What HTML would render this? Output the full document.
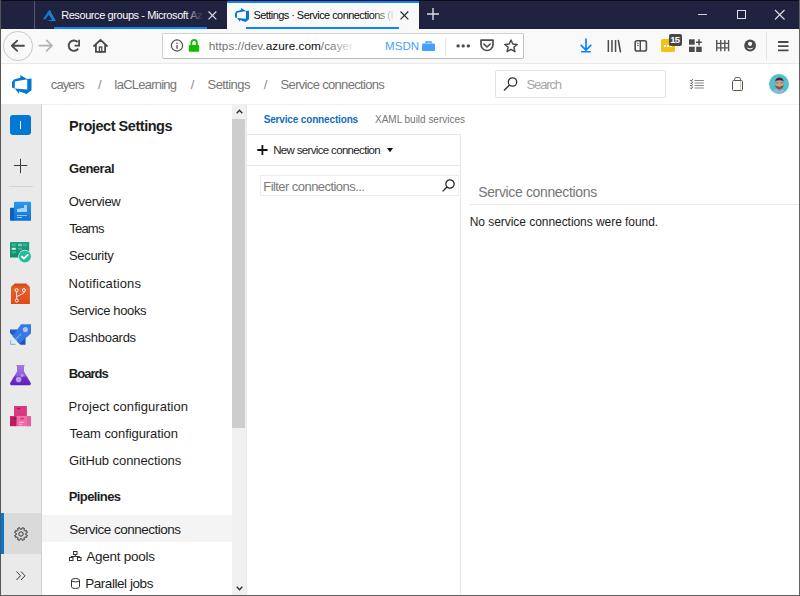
<!DOCTYPE html>
<html><head><meta charset="utf-8">
<style>
html,body{margin:0;padding:0;}
body{width:800px;height:596px;overflow:hidden;position:relative;background:#fff;font-family:"Liberation Sans",sans-serif;}
.a{position:absolute;}
.t{position:absolute;white-space:nowrap;line-height:20px;font-family:"Liberation Sans",sans-serif;}
svg{position:absolute;overflow:visible;}
</style></head><body>

<!-- ===== TAB BAR ===== -->
<div class="a" style="left:0;top:0;width:800px;height:29px;background:#202340;"></div>
<div class="a" style="left:0;top:0;width:800px;height:1px;background:#0c0c18;"></div>
<div class="a" style="left:34px;top:1px;width:1px;height:28px;background:#55586f;"></div>
<!-- tab1 -->
<svg style="left:42px;top:9px" width="14" height="13" viewBox="0 0 14 13">
  <path d="M7.4 0.7 L9.2 2.6 L3.6 10.2 L0.8 10.2 Z" fill="#1277d6"/>
  <path d="M8.4 2.2 L13.9 11.9 L4.2 11.9 L10.2 10.8 L6.9 6.1 Z" fill="#1584e2"/>
</svg>
<div class="a" style="left:54px;top:27px;width:153px;height:2px;background:#0a84ff;"></div>
<svg style="left:208px;top:11px" width="9" height="9" viewBox="0 0 9 9"><path d="M0.5 0.5 L8.3 8.3 M8.3 0.5 L0.5 8.3" stroke="#d8d8de" stroke-width="1.2"/></svg>
<!-- tab2 active -->
<div class="a" style="left:227px;top:1px;width:192px;height:28px;background:#f9f9fa;"></div>
<div class="a" style="left:227px;top:1px;width:192px;height:2px;background:#0a84ff;"></div>
<svg style="left:235px;top:8px" width="14" height="14" viewBox="1 1 16 16">
  <path d="M17 4v9.74l-4 3.28-6.2-2.26V17l-3.51-4.59 10.23.8V4.44zm-3.41.49L7.85 1v2.29L2.58 4.84 1 6.87v4.61l2.26 1V6.57z" fill="#0078d4"/>
</svg>
<div class="a" style="left:246px;top:27px;width:153px;height:2px;background:#0a84ff;"></div>
<svg style="left:400px;top:11px" width="9" height="9" viewBox="0 0 9 9"><path d="M0.5 0.5 L8.3 8.3 M8.3 0.5 L0.5 8.3" stroke="#2a2a2e" stroke-width="1.2"/></svg>
<!-- new tab + -->
<svg style="left:427px;top:8px" width="12" height="12" viewBox="0 0 12 12"><path d="M6 0 V12 M0 6 H12" stroke="#dcdce0" stroke-width="1.4"/></svg>
<!-- window controls -->
<div class="a" style="left:698px;top:14px;width:9px;height:1px;background:#d4d4da;"></div>
<div class="a" style="left:737px;top:10px;width:7px;height:7px;border:1px solid #e0e0e6;"></div>
<svg style="left:775px;top:10px" width="10" height="10" viewBox="0 0 10 10"><path d="M0 0 L9.5 9.5 M9.5 0 L0 9.5" stroke="#e0e0e6" stroke-width="1.1"/></svg>

<!-- ===== NAV TOOLBAR ===== -->
<div class="a" style="left:0;top:29px;width:800px;height:34px;background:#f9f9fa;"></div>
<div class="a" style="left:0;top:63px;width:800px;height:1px;background:#eaeaea;"></div>
<!-- back -->
<div class="a" style="left:3px;top:31px;width:27.5px;height:27.5px;border:1px solid #c8c8cc;border-radius:50%;"></div>
<svg style="left:8px;top:37px" width="20" height="18" viewBox="8 37 20 18"><path d="M24 45.75 H12 M17.2 40.6 L11.8 45.75 L17.2 50.9" fill="none" stroke="#4a4a4f" stroke-width="1.8" stroke-linecap="round" stroke-linejoin="round"/></svg>
<svg style="left:36px;top:37px" width="20" height="18" viewBox="36 37 20 18"><path d="M39.5 45.6 H52 M46.6 40.4 L52 45.6 L46.6 50.8" fill="none" stroke="#b1b1b3" stroke-width="1.7" stroke-linecap="round" stroke-linejoin="round"/></svg>
<!-- reload -->
<svg style="left:64px;top:37px" width="20" height="18" viewBox="64 37 20 18"><path d="M77.6 42 A5.2 5.2 0 1 0 78.2 48.6" fill="none" stroke="#4a4a4f" stroke-width="1.9"/><path d="M79.1 39.8 V45.6 H74.6" fill="none" stroke="#4a4a4f" stroke-width="1.8" stroke-linejoin="miter"/></svg>
<!-- home -->
<svg style="left:90px;top:36px" width="20" height="20" viewBox="90 36 20 20"><path d="M94 46 L100.5 39.8 L107 46 M95.9 44.5 V51.9 H105.1 V44.5" fill="none" stroke="#4a4a4f" stroke-width="1.8" stroke-linejoin="round" stroke-linecap="round"/><rect x="99.4" y="47" width="2.4" height="5" fill="none" stroke="#4a4a4f" stroke-width="1.3"/></svg>
<!-- url bar -->
<div class="a" style="left:162px;top:33px;width:360px;height:24px;background:#fff;border:1px solid #d2d2d2;border-bottom-color:#b9b9b9;border-right-color:#c0c0c0;border-radius:2px;"></div>
<svg style="left:168px;top:37px" width="34" height="17" viewBox="168 37 34 17"><circle cx="177" cy="45.5" r="5.6" fill="none" stroke="#4a4a4f" stroke-width="1.1"/><rect x="176.35" y="45.2" width="1.3" height="3.5" fill="#4a4a4f"/><rect x="176.35" y="42.7" width="1.3" height="1.3" fill="#4a4a4f"/><path d="M191.4 45.2 V42.6 A2.6 2.6 0 0 1 196.8 42.6 V45.2" fill="none" stroke="#12bc00" stroke-width="1.9"/><rect x="188.8" y="45" width="10.4" height="6.8" rx="0.8" fill="#12bc00"/></svg>
<!--briefcase-->
<svg style="left:422px;top:40.5px" width="13" height="10" viewBox="0 0 13 10"><path d="M4 2.5 V1 H9 V2.5" fill="none" stroke="#45a1ff" stroke-width="1.4"/><rect x="0" y="2.5" width="13" height="7.5" rx="1" fill="#45a1ff"/></svg>
<div class="a" style="left:445px;top:38px;width:1px;height:18px;background:#e4e4e6;"></div>
<svg style="left:456px;top:44px" width="15" height="4" viewBox="0 0 15 4"><circle cx="2.1" cy="1.9" r="1.65" fill="#4a4a4f"/><circle cx="7.2" cy="1.9" r="1.65" fill="#4a4a4f"/><circle cx="12.3" cy="1.9" r="1.65" fill="#4a4a4f"/></svg>
<!--pocket-->
<svg style="left:480px;top:39px" width="14" height="13" viewBox="0 0 14 13"><path d="M1 1.2 H13 V5.5 A6 6 0 0 1 1 5.5 Z" fill="none" stroke="#4a4a4f" stroke-width="1.7" stroke-linejoin="round"/><path d="M3.8 5 L7 8 L10.2 5" fill="none" stroke="#4a4a4f" stroke-width="1.6" stroke-linecap="round" stroke-linejoin="round"/></svg>
<!--star-->
<svg style="left:504px;top:39px" width="14" height="14" viewBox="0 0 14 14"><path d="M7 1 L8.8 5 L13.2 5.4 L9.9 8.3 L10.9 12.7 L7 10.4 L3.1 12.7 L4.1 8.3 L0.8 5.4 L5.2 5 Z" fill="none" stroke="#4a4a4f" stroke-width="1.5" stroke-linejoin="round"/></svg>
<!--download-->
<svg style="left:578px;top:37px" width="16" height="17" viewBox="578 37 16 17"><path d="M586 39 V50.2 M581.2 45.4 L586 50.2 L590.8 45.4" fill="none" stroke="#0a84ff" stroke-width="1.7" stroke-linecap="round" stroke-linejoin="round"/><rect x="581" y="51" width="10" height="1.6" rx="0.6" fill="#0a84ff"/></svg>
<!--library-->
<svg style="left:605px;top:38px" width="18" height="16" viewBox="605 38 18 16"><rect x="607.6" y="40" width="1.5" height="12" rx="0.5" fill="#4a4a4f"/><rect x="611.2" y="40" width="1.5" height="12" rx="0.5" fill="#4a4a4f"/><rect x="614.8" y="40" width="1.5" height="12" rx="0.5" fill="#4a4a4f"/><path d="M618.4 40.6 L620.4 51.6" stroke="#4a4a4f" stroke-width="1.6" stroke-linecap="round"/></svg>
<!--sidebar-->
<svg style="left:632px;top:38px" width="17" height="16" viewBox="632 38 17 16"><rect x="635.2" y="40.8" width="11.2" height="10.2" rx="1.8" fill="none" stroke="#4a4a4f" stroke-width="1.6"/><rect x="639.6" y="41" width="1.4" height="10" fill="#4a4a4f"/><rect x="637.2" y="42.8" width="1.4" height="1" fill="#4a4a4f"/><rect x="637.2" y="45" width="1.4" height="1" fill="#4a4a4f"/></svg>
<!--yellow ext-->
<div class="a" style="left:661px;top:39px;width:14px;height:13px;background:#f3c313;border-radius:1.5px;"></div>
<div class="a" style="left:663.5px;top:45px;width:9px;height:1.6px;background:repeating-linear-gradient(to right,#fff 0 1.6px,transparent 1.6px 3.2px);"></div>
<div class="a" style="left:668.5px;top:34px;width:13.5px;height:11.5px;background:#474749;border-radius:2px;"></div>
<div class="t" style="left:670.2px;top:29.8px;font-size:9.5px;font-weight:700;color:#fff;letter-spacing:-0.6px;">15</div>
<!--grid plus-->
<svg style="left:687px;top:38px" width="16" height="16" viewBox="687 38 16 16"><rect x="689" y="39.3" width="5.7" height="5.4" fill="#4a4a4f"/><rect x="689" y="46.7" width="5.7" height="5.3" fill="#4a4a4f"/><rect x="696.2" y="46.7" width="5.5" height="5.3" fill="#4a4a4f"/><path d="M699 39.3 V45.2 M696 42.2 H701.8" stroke="#4a4a4f" stroke-width="1.5"/></svg>
<!--fence-->
<svg style="left:714px;top:38px" width="18" height="16" viewBox="714 38 18 16"><path d="M716.7 40 V51.2 M720.75 40 V51.2 M724.8 40 V51.2 M728.6 40 V51.2" stroke="#55555a" stroke-width="1.4"/><path d="M716.7 43.3 H728.6 M716.7 47.9 H728.6" stroke="#55555a" stroke-width="1.3"/></svg>
<!--account-->
<svg style="left:742px;top:38px" width="16" height="16" viewBox="742 38 16 16"><circle cx="750.1" cy="45.5" r="5.9" fill="#4a4a4f"/><circle cx="750.1" cy="43.8" r="2.1" fill="#f9f9fa"/><path d="M746.3 47.2 Q750.1 52 753.9 47.2 Q750.1 49.2 746.3 47.2 Z" fill="#f9f9fa"/></svg>
<div class="a" style="left:766px;top:32px;width:1px;height:28px;background:#e4e4e6;"></div>
<!--hamburger-->
<svg style="left:778px;top:40.5px" width="11" height="11" viewBox="0 0 11 11"><path d="M0 1 H10.5 M0 5.2 H10.5 M0 9.4 H10.5" stroke="#4a4a4f" stroke-width="1.8"/></svg>

<!-- ===== AZDO HEADER ===== -->
<div class="a" style="left:1px;top:104px;width:798px;height:1px;background:#f0f0f0;"></div>
<svg style="left:11.75px;top:74.5px" width="19.5" height="19" viewBox="1 1 16 16" preserveAspectRatio="none">
  <path d="M17 4v9.74l-4 3.28-6.2-2.26V17l-3.51-4.59 10.23.8V4.44zm-3.41.49L7.85 1v2.29L2.58 4.84 1 6.87v4.61l2.26 1V6.57z" fill="#0078d4"/>
</svg>
<div class="a" style="left:495px;top:70px;width:169px;height:26px;border:1px solid #e3e3e3;border-radius:2px;"></div>
<svg style="left:503px;top:77px" width="15" height="14" viewBox="0 0 15 14"><circle cx="9.5" cy="5" r="4.2" fill="none" stroke="#333" stroke-width="1.3"/><path d="M6.5 8 L1 13.5" stroke="#333" stroke-width="1.4"/></svg>
<!--checklist-->
<svg style="left:688px;top:76px" width="18" height="14" viewBox="688 76 18 14"><path d="M694.5 80.5 H703.8 M694.5 83 H703.8 M694.5 85.5 H703.8 M694.5 88 H703.8" stroke="#777" stroke-width="0.9"/><path d="M690 80.2 L691 81.2 L693 79.3 M690 82.7 L691 83.7 L693 81.8 M690 85.2 L691 86.2 L693 84.3 M690 87.7 L691 88.7 L693 86.8" fill="none" stroke="#333" stroke-width="0.9"/></svg>
<!--bag-->
<svg style="left:730px;top:75px" width="15" height="17" viewBox="730 75 15 17"><rect x="732.5" y="80.5" width="10" height="10" rx="1" fill="none" stroke="#555" stroke-width="1"/><path d="M734.6 80.5 V79 Q734.6 77.5 736.1 77.5 H738.9 Q740.4 77.5 740.4 79 V80.5" fill="none" stroke="#666" stroke-width="1"/><path d="M740.5 81 V90" stroke="#e8c8a8" stroke-width="1"/></svg>
<!--avatar-->
<svg style="left:769px;top:74px" width="20" height="20" viewBox="0 0 20 20">
  <defs><clipPath id="avc"><circle cx="10" cy="10" r="10"/></clipPath></defs>
  <g clip-path="url(#avc)">
    <rect width="20" height="20" fill="#55bfcb"/>
    <path d="M1.5 20 Q3.5 15 9 15.2 Q16 15 18 20 Z" fill="#93b4dc"/>
    <path d="M8.5 14 L10.5 17.5 L12.5 14 Z" fill="#b08a78"/>
    <ellipse cx="10.4" cy="9.8" rx="4.3" ry="5.3" fill="#cfa58a"/>
    <path d="M6 9 Q5.8 3.6 10.4 3.5 Q15 3.6 14.8 9 L14.3 7 Q10.4 5.5 6.5 7 Z" fill="#3a2c26"/>
    <path d="M6.1 10.5 Q6.3 15.3 10.4 15.4 Q14.5 15.3 14.7 10.5 Q13.5 12.6 10.4 12.8 Q7.3 12.6 6.1 10.5 Z" fill="#7a5a48"/>
    <path d="M6.6 8.9 H9.6 M11.2 8.9 H14.2" stroke="#5865a0" stroke-width="0.8"/>
  </g>
</svg>

<!-- ===== LEFT RAIL ===== -->
<div class="a" style="left:1px;top:104px;width:40px;height:491px;background:#eaeaea;"></div>
<div class="a" style="left:41px;top:104px;width:1px;height:491px;background:#d2d2d2;"></div>
<div class="a" style="left:10px;top:115px;width:21px;height:20px;background:#0078d4;border-radius:3px;"></div>
<div class="a" style="left:20px;top:121px;width:1px;height:8px;background:#fff;"></div>
<svg style="left:13px;top:158px" width="16" height="16" viewBox="13 158 16 16"><path d="M20.5 158.8 V173.2 M13.9 165.5 H27.3" stroke="#3a3a3a" stroke-width="1"/></svg>
<div class="a" style="left:9px;top:186px;width:24px;height:1px;background:#d2d2d2;"></div>
<!--overview-->
<svg style="left:10px;top:201px" width="21" height="21" viewBox="0 0 21 21">
  <defs><linearGradient id="ovg" x1="0" y1="0" x2="0" y2="1"><stop offset="0" stop-color="#2d97f0"/><stop offset="1" stop-color="#0e72d5"/></linearGradient></defs>
  <rect x="0" y="6.8" width="5" height="12.9" rx="0.8" fill="#0d5fba"/>
  <rect x="4" y="0.8" width="17" height="18.9" rx="0.8" fill="url(#ovg)"/>
  <path d="M7 11 V7.8 H10.5 V7.1 H14 V4 H17 V11 Z" fill="#a5d3fb"/>
  <rect x="7" y="14" width="10" height="1" fill="#8fc6f7"/>
  <rect x="7" y="16" width="5" height="1" fill="#8fc6f7"/>
</svg>
<!--boards-->
<svg style="left:10px;top:242px" width="21" height="21" viewBox="0 0 21 21">
  <defs><linearGradient id="bdg" x1="0" y1="0" x2="0" y2="1"><stop offset="0" stop-color="#1f9e80"/><stop offset="1" stop-color="#138a6c"/></linearGradient></defs>
  <rect x="0" y="0" width="19.2" height="15.4" rx="0.6" fill="url(#bdg)"/>
  <rect x="1.8" y="1.8" width="4" height="2.3" fill="#3cb895"/><rect x="8.1" y="1.8" width="3.8" height="2.3" fill="#6fd9b8"/><rect x="13.1" y="1.8" width="3.8" height="2.3" fill="#3cb895"/>
  <rect x="1.8" y="5.8" width="4" height="2" fill="#c9f5e6"/><rect x="8.1" y="5.8" width="3.8" height="2" fill="#3cb895"/>
  <rect x="1.8" y="9.3" width="4" height="2" fill="#3cb895"/>
  <circle cx="14.9" cy="14.4" r="6.6" fill="#eaeaea"/>
  <circle cx="14.9" cy="14.4" r="6" fill="#1fbf9b"/>
  <path d="M11.3 14.1 L13.9 16.5 L18.3 12.3" fill="none" stroke="#fff" stroke-width="1.8"/>
</svg>
<!--repos-->
<svg style="left:10px;top:282.6px" width="21" height="22" viewBox="0 0 21 22">
  <defs><linearGradient id="rpg" x1="0" y1="0" x2="0" y2="1"><stop offset="0" stop-color="#d9400e"/><stop offset="0.25" stop-color="#e5602f"/><stop offset="1" stop-color="#de4a19"/></linearGradient></defs>
  <path d="M4.8 0.4 H16.1 L19.9 3.9 V21.1 H1 V3.9 Z" fill="url(#rpg)"/>
  <path d="M6.6 8.7 V16 M13.9 8.7 V10 L6.8 13.6" fill="none" stroke="#fde3d6" stroke-width="1"/>
  <circle cx="6.6" cy="7.2" r="1.5" fill="none" stroke="#fff" stroke-width="1"/>
  <circle cx="13.9" cy="7.2" r="1.5" fill="none" stroke="#fff" stroke-width="1"/>
  <circle cx="6.8" cy="17.5" r="1.5" fill="none" stroke="#fff" stroke-width="1"/>
</svg>
<!--pipelines-->
<svg style="left:10px;top:323.7px" width="21" height="21" viewBox="0 0 21 21">
  <path d="M0 5.5 H8 L3.5 12.5 L0 9 Z" fill="#1f5ec6"/>
  <path d="M11.5 13 H15.5 V20.8 H10.5 L7 17.5 Z" fill="#1a52bd"/>
  <path d="M11 0.3 H21 V9.5 L9.5 19.5 L2.5 12.5 Z" fill="#3579e4"/>
  <circle cx="15.4" cy="5.6" r="2.6" fill="#a7c6f5"/>
  <path d="M11.1 9.9 L5.6 15.4" stroke="#77a7f0" stroke-width="1.2"/>
  <path d="M0.6 15.9 V20.3 H5.6" fill="none" stroke="#8fb8f8" stroke-width="1.3"/>
</svg>
<!--test plans-->
<svg style="left:10px;top:365px" width="21" height="21" viewBox="0 0 21 21">
  <defs><linearGradient id="tpg" x1="0" y1="0" x2="0" y2="1"><stop offset="0" stop-color="#a37ae6"/><stop offset="0.5" stop-color="#9060dc"/><stop offset="0.62" stop-color="#6e30c8"/><stop offset="1" stop-color="#5e22b8"/></linearGradient></defs>
  <path d="M6.3 0 H14.6 V1 H14 V6.6 L20.9 18.3 Q20.9 20.2 19.4 20.2 H1.5 Q0 20.2 0 18.3 L7 6.6 V1 H6.3 Z" fill="url(#tpg)"/>
  <circle cx="8.6" cy="14.6" r="2.8" fill="#c8aef3" opacity="0.85"/>
  <circle cx="12.1" cy="10.6" r="1.5" fill="#c8aef3" opacity="0.75"/>
</svg>
<!--artifacts-->
<svg style="left:10px;top:405px" width="21" height="22" viewBox="0 0 21 22">
  <rect x="4" y="1" width="12.9" height="10.1" fill="#d9387e"/>
  <rect x="0" y="11.1" width="6.8" height="10.1" fill="#c21a60"/>
  <rect x="6.8" y="11.1" width="14.1" height="10.1" fill="#f06ba9"/>
  <rect x="17" y="11.1" width="3.9" height="10.1" fill="#e75c9c"/>
  <rect x="7" y="3" width="3.3" height="1.2" fill="#a8175a"/>
  <rect x="10.6" y="13" width="3" height="1.2" fill="#c52a68"/>
  <rect x="4.3" y="13" width="2.2" height="1.2" fill="#8e0f48"/>
  <rect x="9" y="16.9" width="5" height="0.9" fill="#fbc2dc"/>
  <rect x="9" y="18.9" width="3" height="0.9" fill="#fbc2dc"/>
</svg>
<!-- selected settings -->
<div class="a" style="left:1px;top:513px;width:40px;height:41px;background:#dadada;"></div>
<div class="a" style="left:1px;top:513px;width:3px;height:41px;background:#0078d4;"></div>
<svg style="left:14px;top:526.5px" width="14" height="14" viewBox="0 0 14 14">
  <path d="M11.75 7.71 L13.35 8.41 L12.48 10.49 L10.86 9.86 L9.86 10.86 L10.49 12.48 L8.41 13.35 L7.71 11.75 L6.29 11.75 L5.59 13.35 L3.51 12.48 L4.14 10.86 L3.14 9.86 L1.52 10.49 L0.65 8.41 L2.25 7.71 L2.25 6.29 L0.65 5.59 L1.52 3.51 L3.14 4.14 L4.14 3.14 L3.51 1.52 L5.59 0.65 L6.29 2.25 L7.71 2.25 L8.41 0.65 L10.49 1.52 L9.86 3.14 L10.86 4.14 L12.48 3.51 L13.35 5.59 L11.75 6.29 Z" fill="none" stroke="#333" stroke-width="1" stroke-linejoin="round"/>
  <circle cx="7" cy="7" r="2.2" fill="none" stroke="#333" stroke-width="1"/>
</svg>
<svg style="left:16px;top:570.5px" width="10" height="10" viewBox="0 0 10 10"><path d="M0.5 0.5 L4.5 4.75 L0.5 9 M5 0.5 L9 4.75 L5 9" fill="none" stroke="#333" stroke-width="1"/></svg>

<!-- ===== SETTINGS PANEL ===== -->
<div class="a" style="left:42px;top:515px;width:190px;height:27px;background:#f4f4f4;"></div>
<!-- agent pools icon -->
<svg style="left:68.5px;top:551px" width="13" height="10" viewBox="0 0 13 10"><rect x="4.5" y="0.5" width="3.5" height="3" fill="none" stroke="#333" stroke-width="1"/><path d="M6.25 3.5 V5.5 M2 7 V5.5 H10.5 V7" fill="none" stroke="#333" stroke-width="1"/><rect x="0.5" y="6.5" width="3.5" height="3" fill="none" stroke="#333" stroke-width="1"/><rect x="8.5" y="6.5" width="3.5" height="3" fill="none" stroke="#333" stroke-width="1"/></svg>
<!-- parallel jobs icon -->
<svg style="left:70.5px;top:577.5px" width="9" height="11" viewBox="0 0 9 11"><path d="M0.5 2.2 V8.8 A4 1.7 0 0 0 8.5 8.8 V2.2" fill="none" stroke="#333" stroke-width="1"/><ellipse cx="4.5" cy="2.2" rx="4" ry="1.7" fill="none" stroke="#333" stroke-width="1"/></svg>
<!-- scrollbar -->
<div class="a" style="left:232px;top:105px;width:14px;height:490px;background:#f0f0f0;"></div>
<div class="a" style="left:232px;top:119px;width:13px;height:309px;background:#cdcdcd;"></div>
<svg style="left:235.5px;top:109px" width="7" height="5" viewBox="0 0 7 5"><path d="M0.7 4.3 L3.5 1.2 L6.3 4.3" fill="none" stroke="#333" stroke-width="1.4"/></svg>
<svg style="left:235.5px;top:585.5px" width="7" height="5" viewBox="0 0 7 5"><path d="M0.7 0.7 L3.5 3.8 L6.3 0.7" fill="none" stroke="#333" stroke-width="1.4"/></svg>
<div class="a" style="left:246px;top:105px;width:1px;height:490px;background:#e8e8e8;"></div>

<!-- ===== CONTENT ===== -->
<div class="a" style="left:246px;top:134px;width:214px;height:1px;background:#e6e6e6;"></div>
<div class="a" style="left:246px;top:165px;width:214px;height:1px;background:#e6e6e6;"></div>
<div class="a" style="left:460px;top:134px;width:1px;height:461px;background:#e6e6e6;"></div>
<svg style="left:256.5px;top:145px" width="11" height="10" viewBox="0 0 11 10"><path d="M5.4 0 V10 M0.3 5 H10.6" stroke="#111" stroke-width="1.8"/></svg>
<svg style="left:386.5px;top:148px" width="6" height="4.5" viewBox="0 0 6 4.5"><path d="M0 0 H6 L3 4.2 Z" fill="#111"/></svg>
<div class="a" style="left:260px;top:175px;width:197px;height:19px;border:1px solid #ececec;"></div>
<svg style="left:442px;top:179px" width="13" height="13" viewBox="0 0 13 13"><circle cx="8" cy="5" r="4.2" fill="none" stroke="#222" stroke-width="1.2"/><path d="M5 8 L0.6 12.4" stroke="#222" stroke-width="1.3"/></svg>
<div class="a" style="left:469px;top:204px;width:330px;height:1px;background:#eaeaea;"></div>

<div class="t" id="tab1" style="left:61.14px;top:5.19px;font-size:11px;font-weight:400;color:#f9f9fa;letter-spacing:-0.413px;width:144.86px;overflow:hidden;">Resource groups - Microsoft Az</div>
<div class="t" id="tab2" style="left:253.41px;top:5.19px;font-size:11px;font-weight:400;color:#0c0c0d;letter-spacing:-0.553px;width:143.59px;overflow:hidden;">Settings · Service connections (I</div>
<div class="t" id="url" style="left:208.66px;top:36.41px;font-size:11.8px;font-weight:400;color:#737373;letter-spacing:0.013px;">https://dev.<span style="color:#0c0c0d">azure.com</span>/cayer</div>
<div class="t" id="msdn" style="left:385.10px;top:36.41px;font-size:11.5px;font-weight:400;color:#45a1ff;letter-spacing:0.025px;">MSDN</div>
<div class="t" id="bc1" style="left:50.84px;top:74.89px;font-size:13px;font-weight:400;color:#767676;letter-spacing:-0.895px;">cayers</div>
<div class="t" id="bc2" style="left:98.00px;top:74.89px;font-size:13px;font-weight:400;color:#8a8a8a;letter-spacing:0.000px;">/</div>
<div class="t" id="bc3" style="left:113.98px;top:74.89px;font-size:13px;font-weight:400;color:#767676;letter-spacing:-0.783px;">IaCLearning</div>
<div class="t" id="bc4" style="left:190.75px;top:74.89px;font-size:13px;font-weight:400;color:#8a8a8a;letter-spacing:0.000px;">/</div>
<div class="t" id="bc5" style="left:207.59px;top:74.89px;font-size:13px;font-weight:400;color:#767676;letter-spacing:-0.594px;">Settings</div>
<div class="t" id="bc6" style="left:263.75px;top:74.89px;font-size:13px;font-weight:400;color:#8a8a8a;letter-spacing:0.000px;">/</div>
<div class="t" id="bc7" style="left:280.59px;top:74.89px;font-size:13px;font-weight:400;color:#767676;letter-spacing:-0.674px;">Service connections</div>
<div class="t" id="srch" style="left:526.59px;top:75.49px;font-size:13px;font-weight:400;color:#a6a6a6;letter-spacing:-1.161px;">Search</div>
<div class="t" id="ps" style="left:69.09px;top:115.97px;font-size:14.5px;font-weight:700;color:#1e1e1e;letter-spacing:-0.459px;">Project Settings</div>
<div class="t" id="g1" style="left:69.09px;top:159.24px;font-size:13px;font-weight:700;color:#1e1e1e;letter-spacing:-0.498px;">General</div>
<div class="t" id="n1" style="left:68.79px;top:192.49px;font-size:13px;font-weight:400;color:#1e1e1e;letter-spacing:-0.318px;">Overview</div>
<div class="t" id="n2" style="left:69.20px;top:219.49px;font-size:13px;font-weight:400;color:#1e1e1e;letter-spacing:-0.770px;">Teams</div>
<div class="t" id="n3" style="left:68.99px;top:246.49px;font-size:13px;font-weight:400;color:#1e1e1e;letter-spacing:-0.322px;">Security</div>
<div class="t" id="n4" style="left:68.58px;top:273.99px;font-size:13px;font-weight:400;color:#1e1e1e;letter-spacing:0.126px;">Notifications</div>
<div class="t" id="n5" style="left:69.19px;top:301.49px;font-size:13px;font-weight:400;color:#1e1e1e;letter-spacing:-0.353px;">Service hooks</div>
<div class="t" id="n6" style="left:68.58px;top:328.49px;font-size:13px;font-weight:400;color:#1e1e1e;letter-spacing:-0.286px;">Dashboards</div>
<div class="t" id="g2" style="left:68.79px;top:363.99px;font-size:13px;font-weight:700;color:#1e1e1e;letter-spacing:-0.950px;">Boards</div>
<div class="t" id="n7" style="left:68.58px;top:397.19px;font-size:13px;font-weight:400;color:#1e1e1e;letter-spacing:0.047px;">Project configuration</div>
<div class="t" id="n8" style="left:69.40px;top:423.99px;font-size:13px;font-weight:400;color:#1e1e1e;letter-spacing:-0.077px;">Team configuration</div>
<div class="t" id="n9" style="left:68.99px;top:451.49px;font-size:13px;font-weight:400;color:#1e1e1e;letter-spacing:-0.073px;">GitHub connections</div>
<div class="t" id="g3" style="left:68.69px;top:486.74px;font-size:13px;font-weight:700;color:#1e1e1e;letter-spacing:-0.592px;">Pipelines</div>
<div class="t" id="n10" style="left:69.28px;top:520.32px;font-size:13.5px;font-weight:400;color:#1e1e1e;letter-spacing:-0.498px;">Service connections</div>
<div class="t" id="n11" style="left:86.25px;top:546.82px;font-size:13.5px;font-weight:400;color:#1e1e1e;letter-spacing:-0.263px;">Agent pools</div>
<div class="t" id="n12" style="left:85.20px;top:573.82px;font-size:13.5px;font-weight:400;color:#1e1e1e;letter-spacing:-0.443px;">Parallel jobs</div>
<div class="t" id="ct1" style="left:263.64px;top:109.73px;font-size:10px;font-weight:700;color:#106ebe;letter-spacing:-0.150px;">Service connections</div>
<div class="t" id="ct2" style="left:375.04px;top:109.73px;font-size:10px;font-weight:400;color:#767676;letter-spacing:-0.018px;">XAML build services</div>
<div class="t" id="nsc" style="left:273.20px;top:140.01px;font-size:11.5px;font-weight:400;color:#1e1e1e;letter-spacing:-0.662px;">New service connection</div>
<div class="t" id="flt" style="left:263.28px;top:177.49px;font-size:13px;font-weight:400;color:#7a7a7a;letter-spacing:-0.556px;">Filter connections...</div>
<div class="t" id="sch" style="left:478.16px;top:182.25px;font-size:14px;font-weight:400;color:#767676;letter-spacing:-0.351px;">Service connections</div>
<div class="t" id="nof" style="left:469.76px;top:212.14px;font-size:12px;font-weight:400;color:#1e1e1e;letter-spacing:-0.051px;">No service connections were found.</div>

<!-- url fade -->
<div class="a" style="left:330px;top:36px;width:30px;height:20px;background:linear-gradient(to right,rgba(255,255,255,0),#fff 85%);"></div>
<!-- tab title fades -->
<div class="a" style="left:186px;top:5px;width:21px;height:20px;background:linear-gradient(to right,rgba(32,35,64,0),rgba(32,35,64,.6) 40%,#202340 85%);"></div>
<div class="a" style="left:372px;top:5px;width:26px;height:20px;background:linear-gradient(to right,rgba(249,249,250,0),#f9f9fa 90%);"></div>

<!-- window borders -->
<div class="a" style="left:0;top:0;width:1px;height:596px;background:#555;"></div>
<div class="a" style="left:799px;top:0;width:1px;height:596px;background:#636363;"></div>
<div class="a" style="left:0;top:595px;width:800px;height:1px;background:#606060;"></div>
</body></html>
